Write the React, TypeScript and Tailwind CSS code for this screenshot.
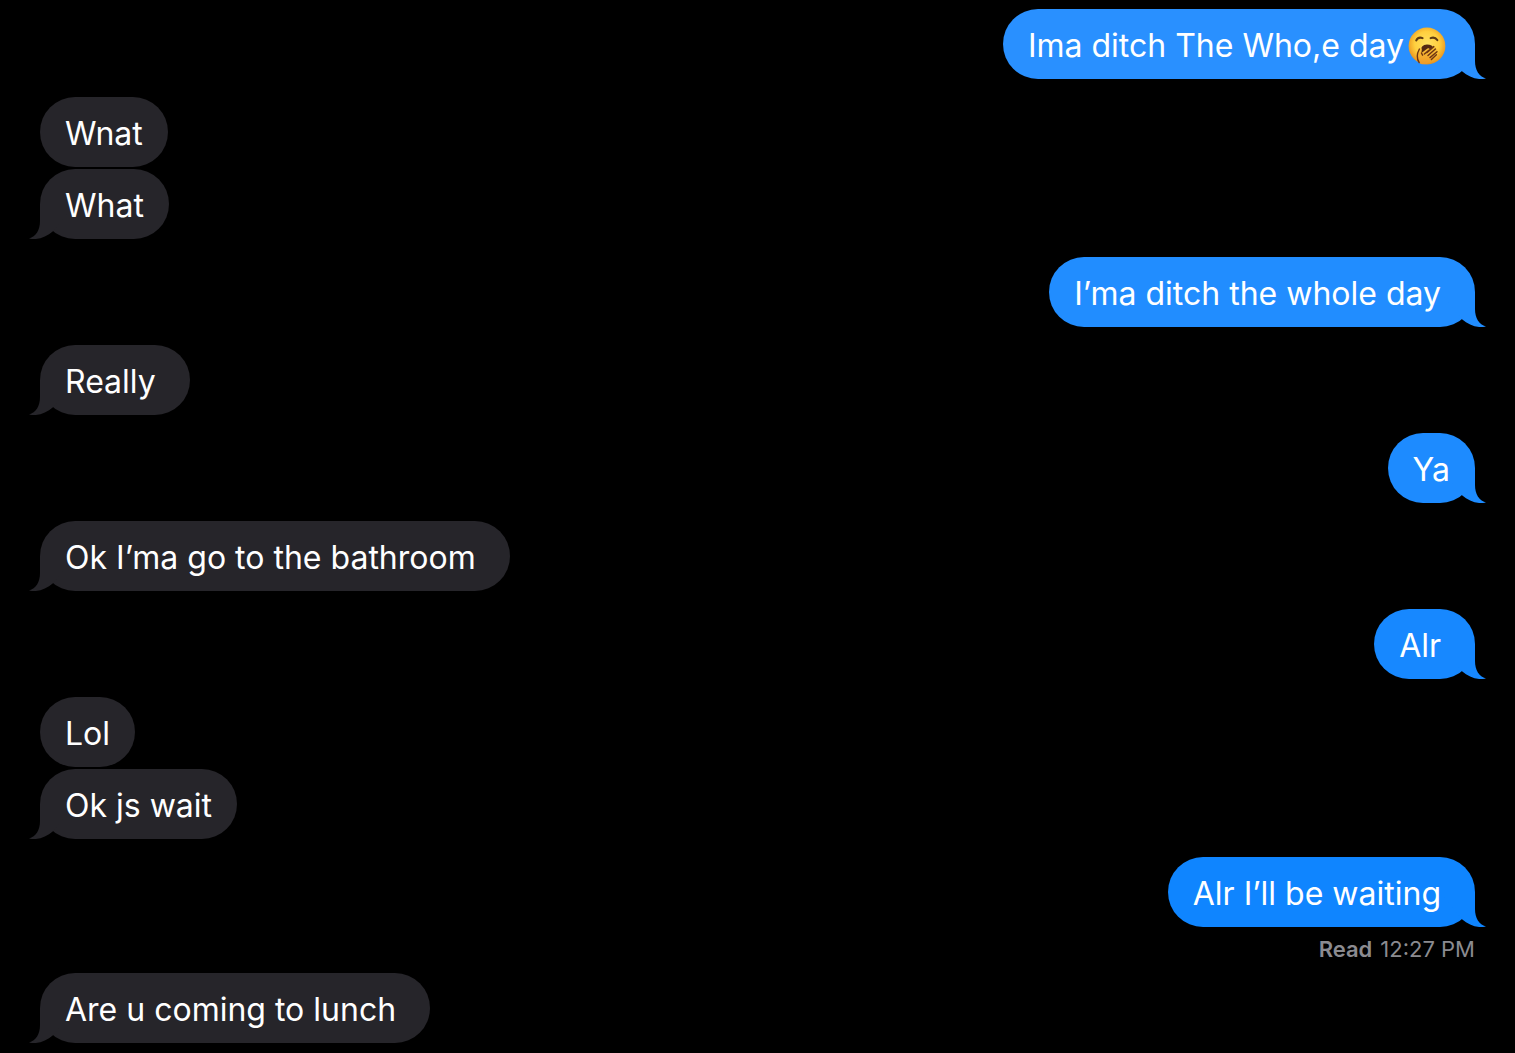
import clsx from 'clsx';

interface Message {
  id: number;
  text: string;
  sent?: boolean;
  tail?: boolean;
  yawn?: boolean;
  color?: string;
  receipt?: string;
}

// Some messages end in a space, as autocomplete left them.
const MESSAGES: Message[] = [
  { id: 1, text: 'Ima ditch The Who,e day', sent: true, tail: true, yawn: true, color: 'bg-[#2990ff] text-[#2990ff]' },
  { id: 2, text: 'Wnat' },
  { id: 3, text: 'What', tail: true },
  { id: 4, text: 'I’ma ditch the whole day ', sent: true, tail: true, color: 'bg-[#218dff] text-[#218dff]' },
  { id: 5, text: 'Really ', tail: true },
  { id: 6, text: 'Ya', sent: true, tail: true, color: 'bg-[#1d8bff] text-[#1d8bff]' },
  { id: 7, text: 'Ok I’ma go to the bathroom ', tail: true },
  { id: 8, text: 'Alr ', sent: true, tail: true, color: 'bg-[#1788ff] text-[#1788ff]' },
  { id: 9, text: 'Lol' },
  { id: 10, text: 'Ok js wait', tail: true },
  { id: 11, text: 'Alr I’ll be waiting ', sent: true, tail: true, color: 'bg-[#0f85ff] text-[#0f85ff]', receipt: '12:27 PM' },
  { id: 12, text: 'Are u coming to lunch ', tail: true },
];

function Tail({ sent }: { sent?: boolean }) {
  return (
    <svg
      viewBox="0 0 46 35"
      aria-hidden="true"
      className={clsx('absolute bottom-0 h-[35px] w-[46px]', sent ? '-right-[11px]' : '-left-[11px] -scale-x-100')}
      fill="currentColor"
    >
      <path d="M0 0H35V17C35 26 39 32.5 46 34.6C37 36.4 29 33 22 27.2Z" />
    </svg>
  );
}

function YawnEmoji() {
  return (
    <svg viewBox="0 0 38 38" role="img" aria-label="yawning face" className="mx-1 h-[38px] w-[38px] shrink-0">
      <defs>
        <radialGradient id="face" cx="50%" cy="44%" r="56%">
          <stop offset="0" stopColor="#ffe262" />
          <stop offset="0.6" stopColor="#ffcf3e" />
          <stop offset="1" stopColor="#e8901c" />
        </radialGradient>
        <linearGradient id="hand" x1="0" y1="0" x2="0" y2="1">
          <stop offset="0" stopColor="#f9c43a" />
          <stop offset="1" stopColor="#f09a26" />
        </linearGradient>
      </defs>
      <circle cx="19" cy="19" r="18.4" fill="url(#face)" />
      <path d="M8.2 13.4Q10.5 9.4 14.6 11.2M22.6 11.2Q26.7 9.4 29.4 13.2" fill="none" stroke="#5e3a12" strokeWidth="2" strokeLinecap="round" />
      <path d="M12.6 25Q12.5 17.8 19 17.6Q24.5 17.6 26 22L20 29L14 29Z" fill="#542a12" />
      <path
        d="M11.4 36C8.6 32 9 26 11.4 22C12.4 20.4 14.2 21 13.8 22.8L13.4 26L19.5 21.5C21 20.5 22.2 21.8 21.2 23L25.6 19.6C27 18.8 28.4 20.2 27.4 21.6L28.4 21.8C29.8 22 30 23.6 29 24.6C29.8 25.4 29.4 26.8 28.4 27.8C25.4 31.4 22.4 36.8 17 37.2C14.5 37.4 12.6 37.2 11.4 36Z"
        fill="url(#hand)"
      />
      <path
        d="M11.2 35.6C8.6 31.6 9.2 26 11.4 22M13.4 26L14.6 28.2M20.8 23.4L16.4 27M25.8 19.6L18.8 25.6M27.4 22L20 28.6M29 24.8L22 30.6M28.4 27.8L23.4 32.6"
        fill="none"
        stroke="#6e3512"
        strokeWidth="1.4"
        strokeLinecap="round"
      />
    </svg>
  );
}

function Bubble({ message }: { message: Message }) {
  const { text, sent, tail, yawn, color } = message;
  return (
    <div
      className={clsx(
        'relative max-w-3/4 rounded-[35px] px-[25px] pt-3.5 pb-2.5',
        sent ? color : 'bg-[#26252a] text-[#26252a]',
      )}
    >
      {tail && <Tail sent={sent} />}
      <p className="relative flex items-center text-[32px] leading-[46px] whitespace-pre-wrap text-white">
        {text}
        {yawn && <YawnEmoji />}
      </p>
    </div>
  );
}

export default function App() {
  return (
    <main className="min-h-screen bg-black px-10 pt-[9px] pb-[10px] font-['Inter','Liberation_Sans',sans-serif]">
      <ol className="flex flex-col">
        {MESSAGES.map((message, i) => {
          const previous = MESSAGES[i - 1];
          const grouped = previous && previous.sent === message.sent;
          return (
            <li
              key={message.id}
              className={clsx(
                'flex flex-col',
                message.sent ? 'items-end' : 'items-start',
                i > 0 && (grouped ? 'mt-0.5' : 'mt-[18px]'),
              )}
            >
              <Bubble message={message} />
              {message.receipt && (
                <p className="-mb-1 flex gap-2 pt-3 text-[22px] leading-5 text-[#8b8b90]">
                  <span className="font-semibold">Read</span>
                  <time>{message.receipt}</time>
                </p>
              )}
            </li>
          );
        })}
      </ol>
    </main>
  );
}
